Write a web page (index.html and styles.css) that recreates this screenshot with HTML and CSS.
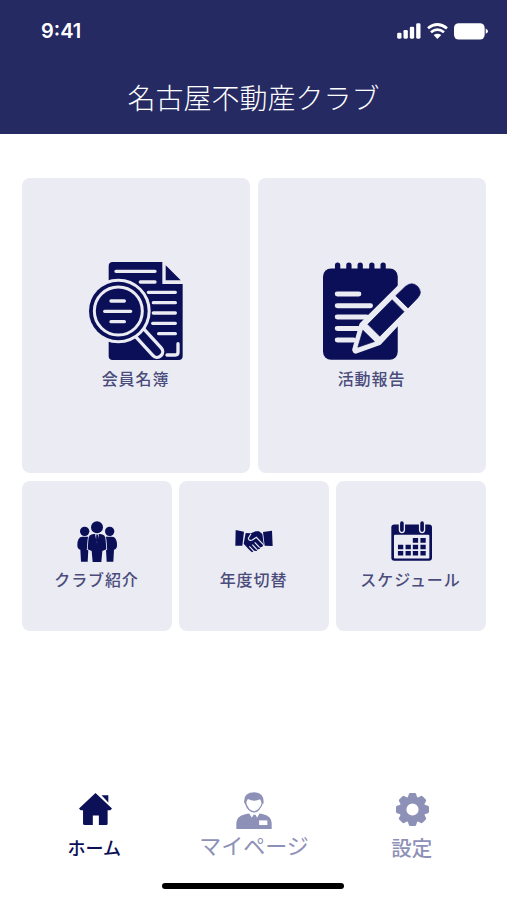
FILE: index.html
```html
<!DOCTYPE html>
<html lang="ja">
<head>
<meta charset="UTF-8">
<meta name="viewport" content="width=device-width, initial-scale=1.0">
<title>名古屋不動産クラブ</title>
<link rel="stylesheet" href="styles.css">
</head>
<body>
  <header>
    <div class="status-bar">
      <time class="clock">9:41</time>
      <div class="status-icons">
        <svg class="signal" viewBox="35 41 71 48">
          <rect x="35" y="70" width="13" height="18" rx="4"/>
          <rect x="54" y="62" width="13" height="26" rx="4"/>
          <rect x="73" y="52" width="13" height="36" rx="4"/>
          <rect x="92" y="42" width="13" height="46" rx="4"/>
        </svg>
        <svg class="wifi" viewBox="125 41 63 48">
          <path class="wave" d="M128 57Q156 34 185 57M137 69Q156 53 176 69"/>
          <path d="M145 77Q156 69 168 77L156 89Z"/>
        </svg>
        <svg class="battery" viewBox="206 41 102 50">
          <rect x="206" y="41" width="92" height="49" rx="14"/>
          <path d="M301 57q7 3 7 8t-7 8z"/>
        </svg>
      </div>
    </div>
    <h1>名古屋不動産クラブ</h1>
  </header>
  <main>
    <div class="card-row large">
      <a class="card">
        <svg class="icon-list" viewBox="27 36 285 294">
          <path d="M98 36H247V102H308V318Q308 330 296 330H98Q86 330 86 318V48Q86 36 98 36Z"/>
          <path d="M257 46L302 91H257Z"/>
          <g class="line">
            <path d="M108 64H225M181 96H225M205 127H286M220 158H286M220 189H286M218 220H286M236 251H286"/>
            <path d="M261 315H286Q294 315 294 307V281"/>
          </g>
          <path class="handle-edge" d="M178 247L231 305"/>
          <path class="handle" d="M178 247L231 305"/>
          <circle class="rim" cx="115" cy="183" r="88"/>
          <circle class="lens" cx="115" cy="183" r="72"/>
          <path class="line" d="M93 153H133M74 184H152M93 215H133"/>
        </svg>
        <span>会員名簿</span>
      </a>
      <a class="card">
        <svg class="icon-report" viewBox="33 36 295 294">
          <rect x="33" y="55" width="225" height="275" rx="24"/>
          <path class="rings" d="M77 45V66M111 45V66M145 45V66M180 45V66M214 45V66"/>
          <path class="rules" d="M76 132H141M76 167H176M76 201H164M76 236H145M76 270H125"/>
          <path class="pencil-edge" d="M153 226L294 86L335 131L199 276L132 300Z"/>
          <path class="pencil" d="M168 223L241 149L277 185L204 259Z"/>
          <path class="pencil" d="M153 241L188 275L138 292Z"/>
          <path class="pencil" d="M252 137L281 109Q301 93 318 109Q334 127 318 144L289 174Z"/>
        </svg>
        <span>活動報告</span>
      </a>
    </div>
    <div class="card-row small">
      <a class="card">
        <svg class="icon-people" viewBox="185 166 120 123">
          <circle cx="208" cy="197" r="14"/>
          <circle cx="283" cy="197" r="14"/>
          <path d="M201 213H217Q230 213 230 228V252H219L217 288H197L195 252Q186 251 186 239Q186 213 201 213Z"/>
          <path d="M290 213H274Q261 213 261 228V252H272L274 288H294L296 252Q305 251 305 239Q305 213 290 213Z"/>
          <path class="center" d="M236 205H254Q271 205 271 224L273 251L261 256L258 289H232L229 256L217 251L219 224Q219 205 236 205Z"/>
          <circle class="center" cx="245" cy="185" r="18"/>
          <path class="shirt" d="M239 206H251L245 233Z"/>
          <path d="M243 207H248L249 226L245 232L242 226Z"/>
        </svg>
        <span>クラブ紹介</span>
      </a>
      <a class="card">
        <svg class="icon-hands" viewBox="60 58 114 72">
          <path d="M62 61L87 66L82 108H61ZM144 67L171 63L173 109L149 108Z"/>
          <path d="M92 70L108 71L122 65H132L142 73L146 103L142 111L136 113L134 118L128 119L125 124L118 123L111 128L104 122L90 107L86 102Z"/>
          <path class="gap" d="M108 72L100 86Q102 95 112 91L124 83L145 105M119 98L134 114M112 105L126 120M103 110L117 125"/>
        </svg>
        <span>年度切替</span>
      </a>
      <a class="card">
        <svg class="icon-calendar" viewBox="120 33 124 120">
          <rect x="121" y="43" width="123" height="110" rx="9"/>
          <rect class="paper" x="129" y="74" width="107" height="72" rx="3"/>
          <path class="clip-edge" d="M153 41V60M214 41V60"/>
          <path class="clip" d="M153 39V60M214 39V60"/>
          <path class="days" d="M186 91H202M209 91H225M141 111H157M164 111H180M186 111H202M209 111H225M141 130H157M164 130H180M186 130H202M209 130H225"/>
        </svg>
        <span>スケジュール</span>
      </a>
    </div>
  </main>
  <nav>
    <a class="tab home active">
      <svg viewBox="86 38 98 95">
        <path d="M135 38L184 84L179 89H171V129Q171 133 167 133H145V105H127V133H103Q98 133 98 129V89H91L86 84Z"/>
        <path d="M153 45H173V66Z"/>
      </svg>
      <span>ホーム</span>
    </a>
    <a class="tab mypage">
      <svg viewBox="138 35 109 112">
        <path d="M163 69Q159 36 194 36Q225 38 221 71L216 68L211 57Q193 66 174 56L167 69Z"/>
        <path class="face" d="M166 62Q168 79 177 88Q193 102 207 88Q216 79 219 63"/>
        <path d="M178 100L186 113L191 104H197L202 113L209 100Q246 104 246 131V147H139V131Q139 104 178 100Z"/>
        <rect class="badge" x="208" y="121" width="25" height="14"/>
      </svg>
      <span>マイページ</span>
    </a>
    <a class="tab settings">
      <svg viewBox="-50 -50 100 100">
        <circle class="gear" r="29"/>
        <path id="tooth" d="M-15 -34L-11 -47Q-10 -50 -7 -50H7Q10 -50 11 -47L15 -34Z"/>
        <use href="#tooth" transform="rotate(45)"/>
        <use href="#tooth" transform="rotate(90)"/>
        <use href="#tooth" transform="rotate(135)"/>
        <use href="#tooth" transform="rotate(180)"/>
        <use href="#tooth" transform="rotate(225)"/>
        <use href="#tooth" transform="rotate(270)"/>
        <use href="#tooth" transform="rotate(315)"/>
      </svg>
      <span>設定</span>
    </a>
  </nav>
  <div class="home-indicator"></div>
</body>
</html>
```
FILE: styles.css
```css
* {
  box-sizing: border-box;
}

body {
  margin: 0;
  height: 900px;
  display: flex;
  flex-direction: column;
  background: #fff;
  font-family: "Noto Sans CJK JP", sans-serif;
  overflow: hidden;
}

svg {
  display: block;
  flex: none;
  fill: currentColor;
}

/* Header */
header {
  height: 134px;
  background: #252a63;
  color: #fff;
}

.status-bar {
  display: flex;
  justify-content: space-between;
  height: 62px;
  padding: 0 19px 0 41px;
  align-items: center;
}

.clock {
  font-family: Inter, sans-serif;
  font-size: 20px;
  font-weight: 600;
}

.status-icons {
  display: flex;
  gap: 6px;
  padding-top: 1px;
}

.signal {
  width: 24px;
  height: 16px;
}

.wifi {
  width: 21px;
  height: 16px;
}

.wave {
  fill: none;
  stroke: #fff;
  stroke-width: 8;
}

.battery {
  width: 34px;
  height: 17px;
}

h1 {
  margin: 0;
  padding-top: 14px;
  font-size: 28px;
  font-weight: 300;
  line-height: 42px;
  text-align: center;
}

/* Menu cards */
main {
  display: flex;
  flex-direction: column;
  gap: 8px;
  padding: 44px 21px 0 22px;
}

.card-row {
  display: flex;
  gap: 8px;
}

.card {
  flex: 1;
  display: flex;
  flex-direction: column;
  align-items: center;
  border-radius: 8px;
  background: #ebebf3;
  color: #0b0f57;
}

.card span {
  font-size: 16px;
  font-weight: 500;
  letter-spacing: 0.9px;
  line-height: 24px;
  color: #4a4c7b;
  white-space: nowrap;
}

.large .card {
  height: 295px;
  padding-top: 84px;
}

.large .card span {
  margin-top: 6px;
  padding-right: 1px;
}

.small {
  gap: 7px;
}

.small .card {
  height: 150px;
  padding-top: 40px;
}

.small .card span {
  margin-top: 5px;
  padding-right: 1px;
}

.icon-list {
  width: 95px;
  height: 98px;
}

.icon-report {
  width: 98px;
  height: 98px;
}

.icon-people {
  width: 40px;
  height: 41px;
}

.icon-hands {
  width: 38px;
  height: 24px;
  margin: 8px 0 9px;
}

.icon-calendar {
  width: 41px;
  height: 40px;
  margin-bottom: 1px;
}

.line,
.rules {
  fill: none;
  stroke: #ebebf3;
  stroke-width: 10;
  stroke-linecap: round;
}

.rules {
  stroke-width: 15;
}

/* Magnifying glass */
.handle-edge,
.handle {
  stroke: #ebebf3;
  stroke-width: 44;
  stroke-linecap: round;
}

.handle {
  stroke: #0b0f57;
  stroke-width: 24;
}

.rim {
  stroke: #ebebf3;
  stroke-width: 18;
  paint-order: stroke;
}

.lens {
  fill: none;
  stroke: #ebebf3;
  stroke-width: 9;
}

/* Notepad and pencil */
.rings {
  fill: none;
  stroke: #0b0f57;
  stroke-width: 16;
  stroke-linecap: round;
}

.pencil-edge {
  fill: #ebebf3;
  stroke: #ebebf3;
  stroke-width: 22;
  stroke-linejoin: round;
}

.pencil {
  stroke: #0b0f57;
  stroke-width: 2;
  stroke-linejoin: round;
}

.center {
  stroke: #ebebf3;
  stroke-width: 5;
  paint-order: stroke;
}

.shirt,
.paper {
  fill: #ebebf3;
}

.gap {
  fill: none;
  stroke: #ebebf3;
  stroke-width: 3.5;
}

.clip-edge,
.clip {
  stroke: #ebebf3;
  stroke-width: 19;
  stroke-linecap: round;
}

.clip {
  stroke: #0b0f57;
  stroke-width: 11;
}

.days {
  stroke: #0b0f57;
  stroke-width: 14;
}

/* Bottom tabs */
nav {
  display: grid;
  grid-template-columns: repeat(3, 1fr);
  height: 91px;
  margin-top: auto;
  padding: 0 15px 0 16px;
}

.tab {
  display: flex;
  flex-direction: column;
  align-items: center;
  color: #8e91b7;
}

.tab.active {
  color: #0b1057;
}

.tab span {
  white-space: nowrap;
  line-height: 30px;
}

.home svg {
  width: 33px;
  height: 32px;
  margin-top: 1px;
}

.home span {
  margin-top: 7px;
  padding-right: 2px;
  font-size: 18px;
  font-weight: 500;
}

.mypage svg {
  width: 36px;
  height: 37px;
}

.mypage span {
  font-size: 22px;
}

.face {
  fill: none;
  stroke: #8e91b7;
  stroke-width: 4;
}

.badge {
  fill: #fff;
}

.settings svg {
  width: 33px;
  height: 33px;
  margin-top: 1px;
}

.settings span {
  margin-top: 6px;
  padding-right: 2px;
  font-size: 20.5px;
  font-weight: 500;
}

.gear {
  fill: none;
  stroke: #8e91b7;
  stroke-width: 21;
}

.home-indicator {
  width: 182px;
  height: 6px;
  margin: 0 163px 11px 162px;
  border-radius: 3px;
  background: #000;
}
```
